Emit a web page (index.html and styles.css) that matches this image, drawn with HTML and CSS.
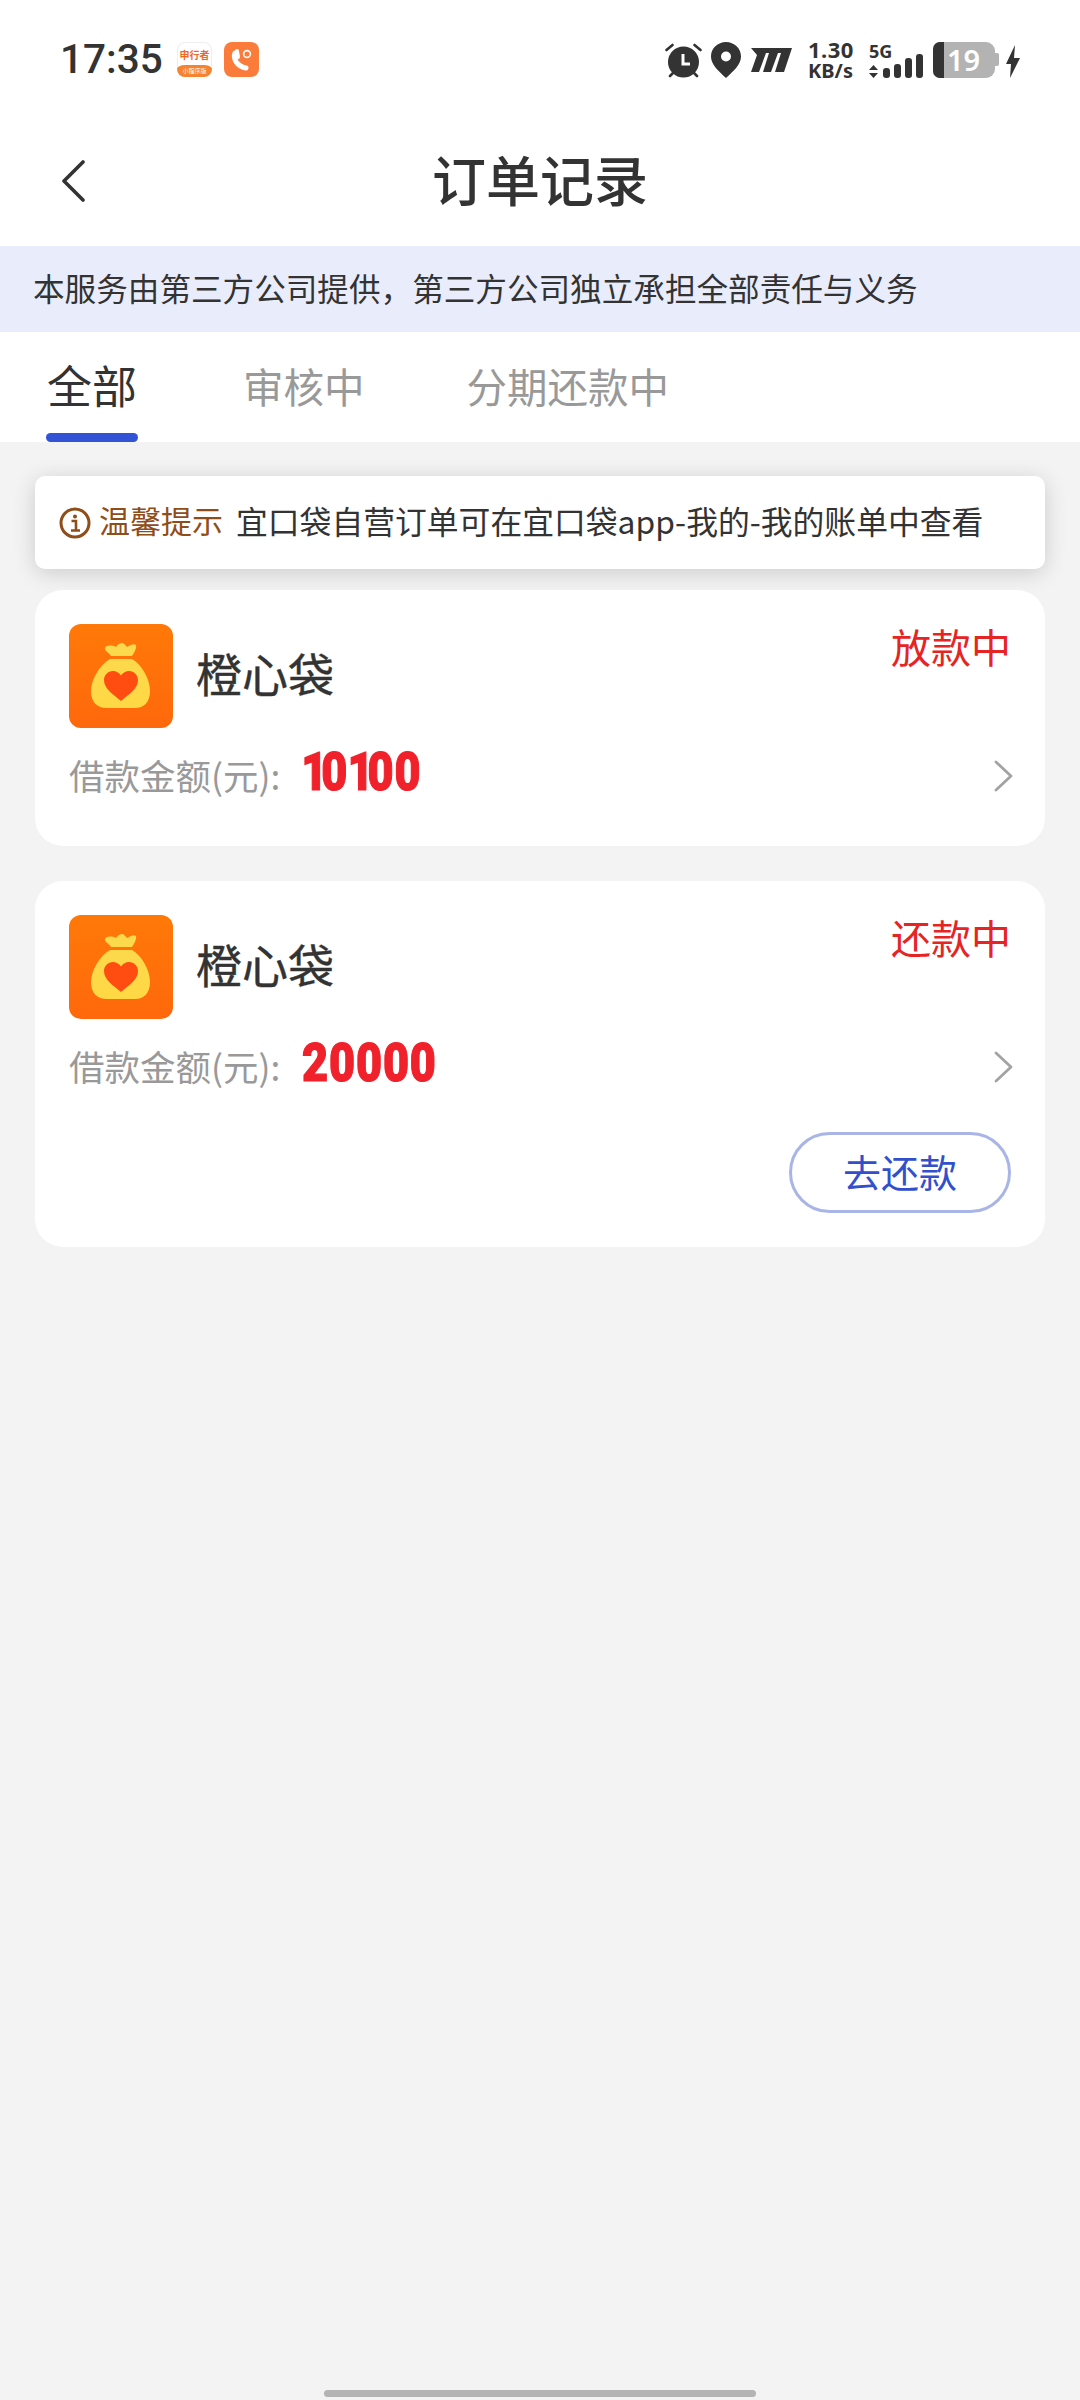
FILE: index.html
```html
<!DOCTYPE html>
<html lang="zh-CN">
<head>
    <meta charset="UTF-8">
    <meta name="viewport" content="width=device-width, initial-scale=1.0">
    <title>订单记录</title>
    <link rel="stylesheet" href="styles.css">
</head>
<body>
<div class="page">

    <!-- Status bar -->
    <div class="status-bar">
        <span class="time">17:35</span>
        <div class="app-badge app-badge-white">
            <span class="badge-name">申行者</span>
            <span class="badge-tag">小程序版</span>
        </div>
        <svg class="app-badge" viewBox="0 0 35 35">
            <rect width="35" height="35" rx="8" fill="#fb7b3a"/>
            <path d="M11 11c-2 5 1 13 11 15" fill="none" stroke="#fff" stroke-width="5" stroke-linecap="round"/>
            <path d="M13 9l1 6" stroke="#fff" stroke-width="4" stroke-linecap="round"/>
            <circle cx="23" cy="12" r="3.4" fill="none" stroke="#fff" stroke-width="1.6"/>
        </svg>

        <div class="status-right">
            <svg class="ico-alarm" viewBox="0 0 37 36">
                <circle cx="18.500" cy="20" r="15.500" fill="#333"/>
                <path d="M1.500 8l6-5M35.500 8l-6-5M5 34l3-3M32 34l-3-3" stroke="#333" stroke-width="2.600" stroke-linecap="round"/>
                <path d="M18 12v10h7" fill="none" stroke="#fff" stroke-width="3"/>
            </svg>
            <svg class="ico-pin" viewBox="0 0 30 36">
                <path fill-rule="evenodd" fill="#333" d="M15 0c8.300 0 15 6.400 15 14.500 0 8-7.500 14.500-15 21.500C7.500 29 0 22.500 0 14.500 0 6.400 6.700 0 15 0zm0 9.500a5 5 0 1 0 0 10 5 5 0 0 0 0-10z"/>
            </svg>
            <svg class="ico-hd" viewBox="0 0 41 24">
                <path fill="#333" d="M0 0H41L33 24H24L30 5H27L20 24H12L18 5H15L8 24H0L6 7z"/>
            </svg>
            <div class="net-speed">
                <span>1.30</span>
                <span>KB/s</span>
            </div>
            <div class="signal">
                <span class="signal-label">5G</span>
                <div class="signal-row">
                    <svg class="ico-updown" viewBox="0 0 9 13">
                        <path fill="#333" d="M4.500 0L9 5H0zM4.500 13L0 8h9z"/>
                    </svg>
                    <div class="bar bar-1"></div>
                    <div class="bar bar-2"></div>
                    <div class="bar bar-3"></div>
                    <div class="bar bar-4"></div>
                </div>
            </div>
            <div class="battery">
                <div class="battery-level"></div>
                <span class="battery-num">19</span>
                <div class="battery-cap"></div>
            </div>
            <svg class="ico-bolt" viewBox="0 0 14 33">
                <path fill="#333" d="M9 0L0 19h5l-1 14 10-20H8z"/>
            </svg>
        </div>
    </div>

    <!-- Title bar -->
    <div class="nav-bar">
        <svg class="nav-back" viewBox="0 0 24 42">
            <path d="M22 2L3 21l19 19" fill="none" stroke="#333" stroke-width="3.600" stroke-linecap="round" stroke-linejoin="round"/>
        </svg>
        <h1 class="nav-title">订单记录</h1>
    </div>

    <div class="notice">本服务由第三方公司提供，第三方公司独立承担全部责任与义务</div>

    <!-- Tabs -->
    <div class="tabs">
        <div class="tab tab-active">全部</div>
        <div class="tab">审核中</div>
        <div class="tab">分期还款中</div>
    </div>

    <div class="content">
        <div class="tip">
            <svg class="tip-icon" viewBox="0 0 32 32">
                <circle cx="16" cy="16" r="14" fill="none" stroke="#8f4d1a" stroke-width="3"/>
                <circle cx="16" cy="9.500" r="2" fill="#8f4d1a"/>
                <path d="M12.500 14H17v9M12 23.500h9" fill="none" stroke="#8f4d1a" stroke-width="2.600"/>
            </svg>
            <span class="tip-label">温馨提示</span>
            <span class="tip-text">宜口袋自营订单可在宜口袋app-我的-我的账单中查看</span>
        </div>

        <!-- Order 1 -->
        <div class="card">
            <div class="card-head">
                <svg class="logo" viewBox="0 0 104 104">
                    <defs>
                        <linearGradient id="bgA" x1="0" y1="0" x2="0" y2="1">
                            <stop offset="0" stop-color="#ff7908"/>
                            <stop offset="1" stop-color="#ff680c"/>
                        </linearGradient>
                        <linearGradient id="bagA" x1="0" y1="0" x2="0" y2="1">
                            <stop offset="0" stop-color="#fbd94e"/>
                            <stop offset="1" stop-color="#ffd844"/>
                        </linearGradient>
                    </defs>
                    <rect width="104" height="104" rx="12" fill="url(#bgA)"/>
                    <path fill="url(#bagA)" d="M36 24c1-3 7-3 11-1 2-3 4-4 6-4 2 0 3 2 5 4 3-2 7-4 9-2 1 3-2 8-4 11H42c-1-3-7-5-6-8zM41 35h22c10 6 18 20 18 32 0 11-6 17-15 17H38c-10 0-16-6-16-17 0-12 9-26 19-32z"/>
                    <path fill="#ff4d12" d="M52 77C44 70 35 65 35 56c0-5 4-9 9-9 3 0 6 1.500 8 4.500C54 48.500 57 47 60 47c5 0 9 4 9 9 0 9-9 14-17 21z"/>
                </svg>
                <span class="name">橙心袋</span>
                <span class="state">放款中</span>
            </div>
            <div class="amount-row">
                <span class="amount-label">借款金额(元):</span>
                <span class="amount"><span class="digit-one">1</span>0<span class="digit-one">1</span>00</span>
                <svg class="chevron" viewBox="0 0 20 32">
                    <path d="M2 2l15 14L2 30" fill="none" stroke="#a3a3a3" stroke-width="2.800" stroke-linecap="round" stroke-linejoin="round"/>
                </svg>
            </div>
        </div>

        <!-- Order 2 -->
        <div class="card card-action">
            <div class="card-head">
                <svg class="logo" viewBox="0 0 104 104">
                    <rect width="104" height="104" rx="12" fill="url(#bgA)"/>
                    <path fill="url(#bagA)" d="M36 24c1-3 7-3 11-1 2-3 4-4 6-4 2 0 3 2 5 4 3-2 7-4 9-2 1 3-2 8-4 11H42c-1-3-7-5-6-8zM41 35h22c10 6 18 20 18 32 0 11-6 17-15 17H38c-10 0-16-6-16-17 0-12 9-26 19-32z"/>
                    <path fill="#ff4d12" d="M52 77C44 70 35 65 35 56c0-5 4-9 9-9 3 0 6 1.500 8 4.500C54 48.500 57 47 60 47c5 0 9 4 9 9 0 9-9 14-17 21z"/>
                </svg>
                <span class="name">橙心袋</span>
                <span class="state">还款中</span>
            </div>
            <div class="amount-row">
                <span class="amount-label">借款金额(元):</span>
                <span class="amount">20000</span>
                <svg class="chevron" viewBox="0 0 20 32">
                    <path d="M2 2l15 14L2 30" fill="none" stroke="#a3a3a3" stroke-width="2.800" stroke-linecap="round" stroke-linejoin="round"/>
                </svg>
            </div>
            <div class="card-foot">
                <button class="btn-repay">去还款</button>
            </div>
        </div>
    </div>

    <div class="home-bar"></div>
</div>
</body>
</html>
```

FILE: styles.css
```css
* {
    box-sizing: border-box;
}

body {
    margin: 0;
    font-family: "Noto Sans CJK SC", "Noto Sans", sans-serif;
    color: #333;
}

.page {
    width: 1080px;
    height: 2400px;
    display: flex;
    flex-direction: column;
    background: #f3f3f3;
    overflow: hidden;
}

/* Status bar */
.status-bar {
    height: 120px;
    padding: 42px 60px 0 60px;
    display: flex;
    align-items: flex-start;
    background: #fff;
}

.time {
    width: 117px;
    font-family: Roboto, sans-serif;
    font-size: 40.500px;
    line-height: 35px;
    font-weight: 500;
}

.app-badge {
    width: 35px;
    height: 35px;
    margin-right: 12px;
    flex-shrink: 0;
}

.app-badge-white {
    border-radius: 8px;
    background: #fff;
    box-shadow: inset 0 0 0 1px #eee;
    display: flex;
    flex-direction: column;
    align-items: center;
    overflow: hidden;
}

.badge-name {
    margin-top: 7px;
    font-size: 10px;
    line-height: 12px;
    font-weight: 700;
    color: #f0691f;
    white-space: nowrap;
}

.badge-tag {
    margin-top: 4px;
    width: 35px;
    height: 12px;
    border-radius: 8px 8px 0 0 / 4px 4px 0 0;
    background: #f58330;
    color: #fff;
    font-size: 6px;
    line-height: 12px;
    text-align: center;
    white-space: nowrap;
}

.status-right {
    margin-left: auto;
    display: flex;
    align-items: flex-start;
}

.ico-alarm {
    width: 37px;
    height: 36px;
    margin-right: 9px;
}

.ico-pin {
    width: 30px;
    height: 36px;
    margin-right: 10px;
}

.ico-hd {
    width: 41px;
    height: 24px;
    margin-top: 6px;
    margin-right: 16px;
}

.net-speed {
    width: 61px;
    display: flex;
    flex-direction: column;
    font-family: "Noto Sans", sans-serif;
    font-size: 20px;
    line-height: 21px;
    font-weight: 700;
    margin-top: -3px;
}

.net-speed span:first-child {
    font-size: 22px;
    letter-spacing: 0.500px;
}

.signal {
    width: 64px;
    display: flex;
    flex-direction: column;
}

.signal-label {
    font-family: "Noto Sans", sans-serif;
    font-size: 18px;
    line-height: 18px;
    font-weight: 700;
}

.signal-row {
    display: flex;
    align-items: flex-end;
    gap: 4px;
    height: 18px;
}

.ico-updown {
    width: 9px;
    height: 13px;
    margin-right: 1px;
}

.bar {
    width: 7px;
    flex-shrink: 0;
    background: #333;
    border-radius: 3px;
}

.bar-1 { height: 10px; }
.bar-2 { height: 14px; }
.bar-3 { height: 20px; }
.bar-4 { height: 24px; }

.battery {
    width: 62px;
    height: 36px;
    display: flex;
    position: relative;
    background: #b3b3b3;
    border-radius: 7px 9px 9px 7px;
}

.battery-level {
    width: 11px;
    background: #333;
    border-radius: 7px 0 0 7px;
}

.battery-num {
    margin-left: 3px;
    font-family: "Noto Sans", sans-serif;
    font-size: 29px;
    line-height: 36px;
    font-weight: 600;
    color: #fff;
}

.battery-cap {
    position: absolute;
    right: -4px;
    top: 11px;
    width: 4px;
    height: 13px;
    background: #b3b3b3;
    border-radius: 0 2px 2px 0;
}

.ico-bolt {
    width: 14px;
    height: 33px;
    margin-left: 11px;
    margin-top: 3px;
}

/* Title bar */
.nav-bar {
    height: 126px;
    padding-bottom: 9px;
    display: flex;
    align-items: center;
    justify-content: center;
    position: relative;
    background: #fff;
}

.nav-back {
    position: absolute;
    left: 61px;
    top: 40px;
    width: 24px;
    height: 42px;
}

.nav-title {
    margin: 0;
    font-size: 54px;
    line-height: 72px;
    font-weight: 500;
    color: #333;
}

.notice {
    height: 86px;
    padding-left: 33px;
    background: #e9edfb;
    font-size: 31.600px;
    line-height: 83px;
    color: #333;
}

/* Tabs */
.tabs {
    height: 110px;
    padding-left: 47px;
    display: flex;
    background: #fff;
}

.tab {
    margin-right: 102px;
    font-size: 40.500px;
    line-height: 107px;
    color: #999;
    position: relative;
}

.tab-active {
    margin-right: 106px;
    font-size: 45px;
    color: #333;
    line-height: 106px;
}

.tab-active::after {
    content: "";
    position: absolute;
    left: -1px;
    bottom: 0;
    width: 92px;
    height: 9px;
    border-radius: 5px;
    background: #3353d6;
}

/* Content */
.content {
    padding: 34px 35px 0;
    display: flex;
    flex-direction: column;
}

.tip {
    height: 93px;
    padding: 0 0 6px 24px;
    display: flex;
    align-items: center;
    background: #fff;
    border-radius: 10px;
    box-shadow: 0 4px 22px rgba(0, 0, 0, 0.16);
    margin-bottom: 21px;
}

.tip-icon {
    width: 32px;
    height: 32px;
    margin: 6px 8px 0 0;
}

.tip-label {
    font-size: 31px;
    color: #8f4d1a;
    margin-right: 13px;
}

.tip-text {
    font-size: 31.800px;
    color: #333;
}

.card {
    height: 256px;
    margin-bottom: 35px;
    padding: 34px 34px 0;
    display: flex;
    flex-direction: column;
    background: #fff;
    border-radius: 28px;
}

.card-action {
    height: 366px;
}

.card-head {
    height: 104px;
    display: flex;
    align-items: flex-start;
}

.logo {
    width: 104px;
    height: 104px;
    margin-right: 23px;
}

.name {
    font-size: 46px;
    line-height: 96px;
    font-weight: 400;
    color: #333;
    -webkit-text-stroke: 0.400px #333;
}

.state {
    margin-left: auto;
    font-size: 40px;
    line-height: 44px;
    color: #e62424;
}

.amount-row {
    height: 72px;
    margin-top: 10px;
    display: flex;
    align-items: center;
}

.amount-label {
    width: 233px;
    font-size: 35.500px;
    color: #999;
    white-space: nowrap;
}

.amount {
    margin-bottom: 5px;
    font-family: Roboto, sans-serif;
    font-size: 53px;
    font-weight: 900;
    letter-spacing: 1px;
    color: #f0212b;
    -webkit-text-stroke: 1.200px #f0212b;
    transform: scaleX(0.85);
    transform-origin: left center;
}

.digit-one {
    margin-left: -1px;
    letter-spacing: -7px;
}

.chevron {
    margin-left: auto;
    margin-right: -3px;
    margin-top: 4px;
    width: 20px;
    height: 32px;
}

.card-foot {
    margin-top: 31px;
    display: flex;
    justify-content: flex-end;
}

.btn-repay {
    width: 222px;
    height: 81px;
    padding: 0 0 5px;
    border: 3px solid #a9b5e6;
    border-radius: 41px;
    background: #fff;
    font-family: inherit;
    font-size: 38px;
    color: #3350cc;
}

.home-bar {
    width: 432px;
    height: 7px;
    margin: auto auto 3px;
    border-radius: 4px;
    background: #b4b4b4;
}
```
